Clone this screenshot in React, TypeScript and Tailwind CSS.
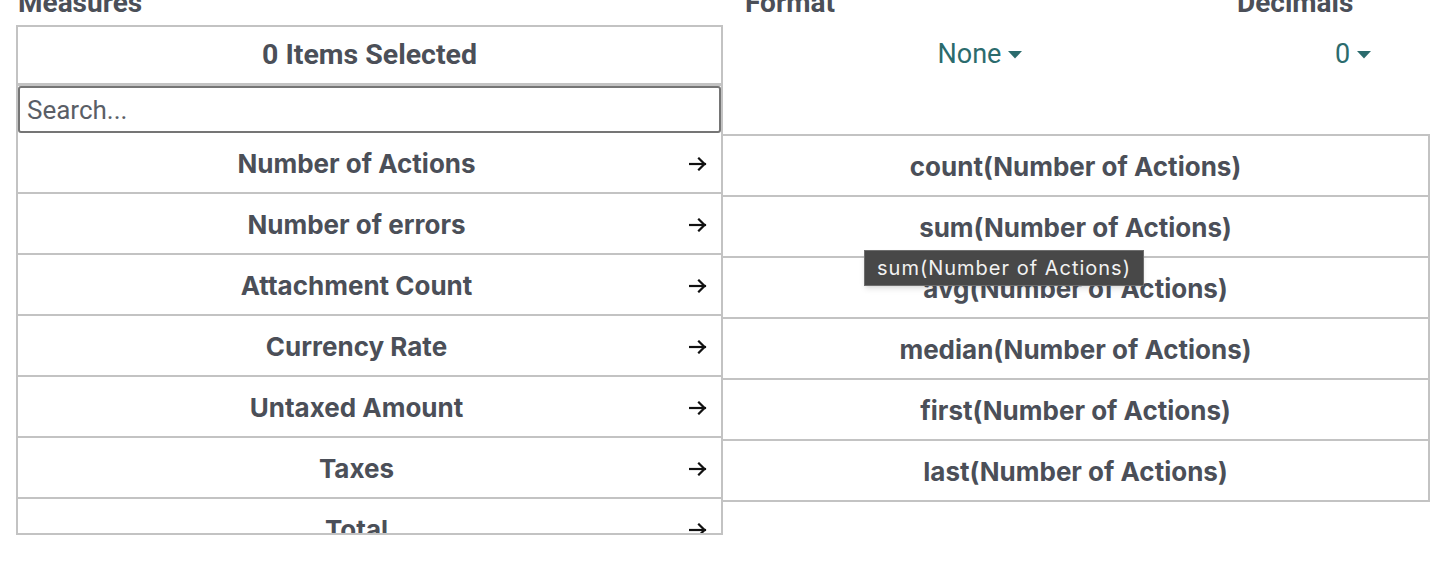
import React from 'react';

const measures = [
  'Number of Actions',
  'Number of errors',
  'Attachment Count',
  'Currency Rate',
  'Untaxed Amount',
  'Taxes',
  'Total',
];

const aggregates = ['count', 'sum', 'avg', 'median', 'first', 'last'];

function ArrowIcon() {
  return (
    <svg width="18" height="14" viewBox="0 0 18 14" fill="none" stroke="#111" strokeWidth="2.2" strokeLinecap="square" className="mt-[3px]">
      <path d="M1 7h15" />
      <path d="M10 1.5l5.5 5.5-5.5 5.5" />
    </svg>
  );
}

function Caret() {
  return (
    <svg width="14" height="8" viewBox="0 0 14 8" className="ml-[7px]">
      <path d="M0 0h14L7 7.5z" fill="#2b6b6d" />
    </svg>
  );
}

export default function App() {
  return (
    <div className="relative w-[1440px] h-[572px] overflow-hidden bg-white font-['Roboto',sans-serif] text-[#4b4f58]">
      <div className="flex pl-4 -mt-[12px]">
        {/* Measures column */}
        <div className="w-[707px] shrink-0">
          <div className="h-[37px] pl-[2px] text-[28px] font-bold leading-[30px]">Measures</div>
          <div className="h-[510px] border-2 border-[#c3c3c3] overflow-hidden flex flex-col">
            <div className="h-[59px] shrink-0 border-b-[3px] border-[#c3c3c3] flex items-center justify-center text-[28.5px] font-bold">
              0 Items Selected
            </div>
            <input
              className="h-[47px] shrink-0 border-2 border-[#757575] rounded-[3px] px-[7px] text-[26px] text-[#4b4f58] placeholder:text-[#5a5e66] outline-none"
              placeholder="Search..."
            />
            {measures.map((m) => (
              <div key={m} className="h-[61px] shrink-0 border-b-2 border-[#c3c3c3] flex items-center pr-[14px]">
                <div className="flex-1 text-center font-['Inter',sans-serif] font-bold text-[26px] pl-[6px] pt-[2px]">{m}</div>
                <ArrowIcon />
              </div>
            ))}
          </div>
        </div>

        {/* Format / Decimals */}
        <div className="flex-1 flex flex-col">
          <div className="h-[37px] flex text-[28px] font-bold leading-[30px]">
            <div className="w-[514px] pl-[22px]">Format</div>
            <div>Decimals</div>
          </div>
          <div className="h-[59px] flex items-center text-[27px] text-[#2b6b6d]">
            <div className="w-[514px] flex items-center justify-center">
              None
              <Caret />
            </div>
            <div className="pl-[98px] flex items-center">
              0
              <Caret />
            </div>
          </div>
          <div className="mt-[50px] w-[707px] border-t-2 border-r-2 border-[#c3c3c3]">
            {aggregates.map((a) => (
              <div key={a} className="h-[61px] border-b-2 border-[#c3c3c3] flex items-center justify-center font-['Inter',sans-serif] font-bold text-[26px] pt-[2px]">
                {a}(Number of Actions)
              </div>
            ))}
          </div>
        </div>
      </div>

      <div className="absolute left-[864px] top-[250px] h-[36px] px-[12px] flex items-center bg-[#484848] border border-[#6e6e6e] text-[#f2f2f2] font-['Inter',sans-serif] text-[20px] tracking-[1px] shadow-md">
        sum(Number of Actions)
      </div>
    </div>
  );
}
